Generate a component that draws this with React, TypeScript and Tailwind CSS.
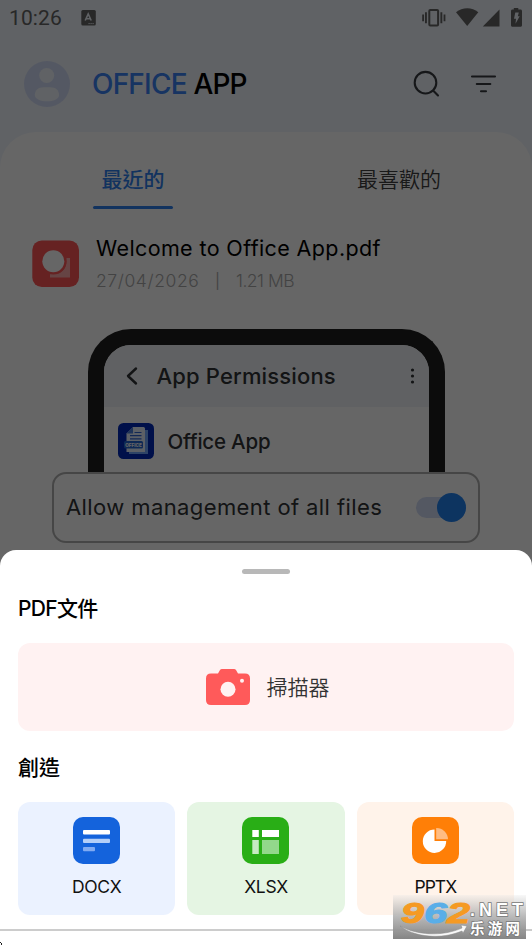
import { ReactNode } from "react";

function StatusBar() {
  return (
    <div className="flex h-9 items-center justify-between pl-[9px] pr-[9px] text-[#646464]">
      <div className="flex items-center gap-[19px]">
        <span className="font-[Roboto] text-[21px] leading-none tracking-[0.1px]">10:26</span>
        <svg width="15" height="16" viewBox="0 0 15 16">
          <rect width="14.5" height="15.5" x="0.3" rx="1.5" fill="currentColor" />
          <path d="M4.2 10.5 7.2 4l3 6.5M5.2 8.8h4" fill="none" stroke="#f0f5fc" strokeWidth="1.6" />
          <path d="M7.5 13.6h5.500" stroke="#f0f5fc" strokeWidth="1" strokeDasharray="1.2 0.8" />
        </svg>
      </div>
      <svg width="102" height="20" viewBox="421 8 102 20" fill="currentColor">
        <path d="M422.2 14.5h1.8v6.8h-1.8zM425 12.2h1.9v11H425zM440.4 12.2h1.9v11h-1.9zM443.6 14.5h1.8v6.8h-1.8z" />
        <rect x="429.3" y="10" width="8.8" height="15.5" rx="1" fill="none" stroke="currentColor" strokeWidth="2" />
        <path d="M456 12.2C462.500 7 472 7 478.300 12.200L467.200 26z" />
        <path d="M499.500 9.500V26.500H482.800z" />
        <path d="M513.8 8h4.500v1.400h2.200c.9 0 1.5.6 1.5 1.5v14.300c0 .9-.6 1.5-1.5 1.5h-8c-.9 0-1.500-.6-1.500-1.500V10.900c0-.9.600-1.500 1.500-1.500h1.300z" />
        <path d="M515.300 12.500h3.500l-1 3.800h1.900l-4.200 7.500.5-5h-2z" fill="#f0f5fc" />
      </svg>
    </div>
  );
}

function Header() {
  return (
    <header className="flex h-24 items-center pl-6 pr-[35px]">
      <svg width="46" height="46" viewBox="0 0 46 46">
        <circle cx="23" cy="23" r="23" fill="#d2dcf8" />
        <circle cx="22.7" cy="14.5" r="7.5" fill="#f0f5fc" />
        <path d="M10.8 34c0-5 4-7.700 8.500-7.700h7.200c4.700 0 8.600 2.700 8.600 7.700 0 4.200-6 6.300-12.100 6.300S10.800 38.200 10.800 34z" fill="#f0f5fc" />
      </svg>
      <h1 className="ml-[22px] flex-1 whitespace-nowrap text-[28px] font-medium leading-none tracking-[-0.8px] text-black">
        <span className="text-[#3b82f6]">OFFICE</span> APP
      </h1>
      <svg width="28" height="28" viewBox="413 70 28 28" fill="none" stroke="#373b40" strokeWidth="2.1" strokeLinecap="round">
        <circle cx="425.5" cy="82.7" r="10.8" />
        <path d="M433.3 90.8 438 95.5" />
      </svg>
      <svg className="ml-[29px]" width="27" height="28" viewBox="470 70 27 28" fill="none" stroke="#373b40" strokeWidth="2.1" strokeLinecap="round">
        <path d="M472 76.5h23M476.8 84h13.5M481 91.3h5" />
      </svg>
    </header>
  );
}

function Tabs() {
  return (
    <div className="grid grid-cols-2 text-center text-[21px] leading-none">
      <div className="flex flex-col items-center pt-[37px] font-medium text-[#2f80ed]">
        最近的
        <span className="mt-4 h-[3px] w-20 rounded-full bg-[#2f80ed]" />
      </div>
      <div className="pt-[37px] font-[350] text-[#404040]">最喜歡的</div>
    </div>
  );
}

function FileRow() {
  return (
    <div className="mt-[27px] flex h-[54px] pl-8">
      <svg className="mt-1" width="47" height="47" viewBox="0 0 47 47">
        <rect x="0.3" y="0.5" width="46.7" height="46.5" rx="9.5" fill="#ff5656" />
        <path d="M34.5 18h3.5v19.500H18v-4.200h6c7 0 10.500-6 10.500-12z" fill="#ffaaaa" />
        <circle cx="21.3" cy="21.3" r="13.2" fill="#ff5656" />
        <circle cx="21.3" cy="21.3" r="11" fill="#fff" />
      </svg>
      <div className="ml-[17px] whitespace-nowrap">
        <p className="text-[21.5px] leading-6 tracking-[0.38px] text-black">Welcome to Office App.pdf</p>
        <p className="mt-[9px] flex text-[17.5px] font-light leading-6 text-[#a8a8a8]">
          <span className="w-[119px] tracking-[0.6px]">27/04/2026</span>
          <span className="w-[21px] text-[15px] font-normal">|</span>
          <span className="tracking-[-0.5px]">1.21 MB</span>
        </p>
      </div>
    </div>
  );
}

function OfficeLogo() {
  return (
    <svg width="36" height="36" viewBox="0 0 36 36">
      <rect width="36" height="36" rx="5.5" fill="#0029b8" />
      <path d="M27 7h3v24H11v-4h16z" fill="#70a9ff" />
      <path d="M15 4h10.5q1.5 0 1.5 1.5V29H8.500V10.500z" fill="#e7f0ff" />
      <path d="M15 4v6.500H8.500z" fill="#4f82df" />
      <path d="M16.5 9.5h7M12 12.7h11.5M12 15.8h11.5" stroke="#2f65d5" strokeWidth="1.2" />
      <rect x="6" y="18" width="19" height="7.5" rx="1.5" fill="#2468d4" />
      <text x="15.5" y="23.7" fontSize="5" fontWeight="800" textAnchor="middle" textLength="16.5" lengthAdjust="spacingAndGlyphs" fill="#fff">OFFICE</text>
    </svg>
  );
}

function PermissionGuide() {
  return (
    <div className="mt-[39px] flex flex-col items-center text-[#303336]">
      <div className="h-[143px] w-[357px] overflow-hidden rounded-t-[43px] border-x-[16px] border-t-[16px] border-[#202020] bg-white">
        <div className="flex h-[62px] items-center bg-[#f0f3f8] pl-[21px] pr-[14px]">
          <svg width="16" height="20" viewBox="0 0 16 20" fill="none" stroke="currentColor" strokeWidth="2.4" strokeLinecap="round" strokeLinejoin="round">
            <path d="m11 2.500-8 7.500 8 7.500" />
          </svg>
          <span className="ml-4 flex-1 whitespace-nowrap text-[22px] font-medium leading-none tracking-[0.15px]">App Permissions</span>
          <svg width="5" height="18" viewBox="0 0 5 18" fill="currentColor">
            <circle cx="2.5" cy="3" r="1.6" />
            <circle cx="2.5" cy="9" r="1.6" />
            <circle cx="2.5" cy="15" r="1.6" />
          </svg>
        </div>
        <div className="mt-4 flex h-9 items-center gap-3.5 pl-[14px]">
          <OfficeLogo />
          <span className="pt-0.5 text-[20.5px] font-medium leading-none tracking-[-0.2px]">Office App</span>
        </div>
      </div>
      <div className="flex h-[71px] w-[428px] items-center justify-between rounded-[14px] border-2 border-[#b0b0b0] bg-white pl-3 pr-3">
        <span className="whitespace-nowrap pb-0.5 text-[22px] leading-none tracking-[0.4px]">Allow management of all files</span>
        <span className="flex h-[21px] w-[50px] items-center justify-end rounded-full bg-[#d2dcf5]">
          <span className="size-[29px] shrink-0 rounded-full bg-[#2182f1]" />
        </span>
      </div>
    </div>
  );
}

function CreateCard({ label, bg, children }: { label: ReactNode; bg: string; children: ReactNode }) {
  return (
    <div className={`flex h-[113px] flex-1 flex-col items-center rounded-xl pt-[15px] ${bg}`}>
      <svg width="47" height="47" viewBox="0 0 47 47">{children}</svg>
      <span className="mt-[14px] text-[17.5px] leading-[18px] tracking-[-0.3px] text-[#111]">{label}</span>
    </div>
  );
}

function Watermark() {
  return (
    <div className="absolute left-[393px] top-[895px] h-11 w-[133px] bg-linear-to-b from-[#e8e8e8]/30 via-[#b0b0b0]/90 to-[#858585]">
      <svg width="133" height="44" viewBox="0 0 133 44" fontFamily="Liberation Sans, Noto Sans CJK SC, sans-serif">
        <text x="8" y="28" fontSize="29" fontWeight="700" fontStyle="italic" strokeWidth="1" textLength="69" lengthAdjust="spacingAndGlyphs">
          <tspan fill="#f59a23" stroke="#f59a23">9</tspan>
          <tspan fill="#59aee8" stroke="#59aee8">6</tspan>
          <tspan fill="#f59a23" stroke="#f59a23">2</tspan>
        </text>
        <g fill="#fff" stroke="#777" strokeWidth="1.5" paintOrder="stroke" fontWeight="700">
          <text x="77" y="21" fontSize="18" textLength="53" lengthAdjust="spacing">.NET</text>
          <text x="77" y="39" fontSize="14.5" textLength="50">乐游网</text>
        </g>
        <path d="M7 31c16 9 42 11 62 2l-1-3 6 1-4 7-1-2C48 45 21 42 7 31z" fill="#f8f8f8" stroke="#888" strokeWidth="0.5" />
      </svg>
    </div>
  );
}

function BottomSheet() {
  return (
    <section className="absolute inset-x-0 bottom-0 h-[395px] rounded-t-2xl bg-white">
      <div className="mx-auto mt-[19px] h-[5px] w-12 rounded-full bg-[#b8b8b8]" />
      <div className="px-[18px]">
        <h2 className="mt-[23px] h-6 text-[21px] font-medium leading-6 tracking-[-0.7px] text-black">PDF文件</h2>
        <div className="mt-[22px] flex h-22 items-center justify-center gap-[17px] rounded-xl bg-[#fff2f2] pl-[3px]">
          <svg width="44" height="36" viewBox="0 0 44 36">
            <path d="M12 4.500 14 1q.6-1 2-1h12q1.400 0 2 1l2 3.500h7q5 0 5 5V31q0 5-5 5H5q-5 0-5-5V9.500q0-5 5-5z" fill="#ff5a5a" />
            <circle cx="22" cy="20.3" r="7.5" fill="#fff2f2" />
            <circle cx="36" cy="11.8" r="2" fill="#fff2f2" />
          </svg>
          <span className="text-[21px] font-[350] leading-none text-[#333]">掃描器</span>
        </div>
        <h2 className="mt-[25px] h-6 text-[21px] font-medium leading-6 text-black">創造</h2>
        <div className="mt-[22px] flex gap-3">
          <CreateCard label="DOCX" bg="bg-[#ebf2ff]">
            <rect width="47" height="47" rx="10" fill="#1463dc" />
            <rect x="10" y="13" width="27" height="4.5" rx="1" fill="#fff" />
            <rect x="10" y="21.7" width="27" height="4.3" rx="1" fill="#b4cff8" />
            <rect x="10" y="30" width="12" height="4.3" rx="1" fill="#81abf2" />
          </CreateCard>
          <CreateCard label="XLSX" bg="bg-[#e5f5e3]">
            <rect width="47" height="47" rx="10" fill="#29ae16" />
            <path d="M10.300 13h6.500v7h-6.500zM20 13h17v7H20z" fill="#fff" />
            <path d="M10.300 23h6.500v14h-6.500z" fill="#c6eac2" />
            <path d="M20 23h17v14H20z" fill="#93d88b" />
          </CreateCard>
          <CreateCard label={<span className="tracking-[-1px]">PPTX</span>} bg="bg-[#fff3ea]">
            <rect width="47" height="47" rx="10" fill="#ff7f07" />
            <path d="M22.500 12.500V24h11.700A11.700 11.700 0 1 1 22.500 12.500z" fill="#fff" />
            <path d="M24.200 11A11.500 11.500 0 0 1 36 22.200H24.200z" fill="#ffbd83" />
          </CreateCard>
        </div>
      </div>
      <div className="mt-3.5 h-0.5 bg-[#ccc]" />
      <svg className="mt-[11px]" width="2" height="3">
        <path d="M0 0h1v1H0zM1 1h1v2H1z" fill="#222" />
      </svg>
    </section>
  );
}

export default function App() {
  return (
    <div className="relative h-[945px] w-[532px] overflow-hidden bg-[#f0f5fc] font-[Inter,'Noto_Sans_CJK_TC',sans-serif]">
      <StatusBar />
      <Header />
      <main className="h-[813px] rounded-t-[36px] bg-white">
        <Tabs />
        <FileRow />
        <PermissionGuide />
      </main>
      <div className="absolute inset-0 bg-black/60" />
      <BottomSheet />
      <Watermark />
    </div>
  );
}
